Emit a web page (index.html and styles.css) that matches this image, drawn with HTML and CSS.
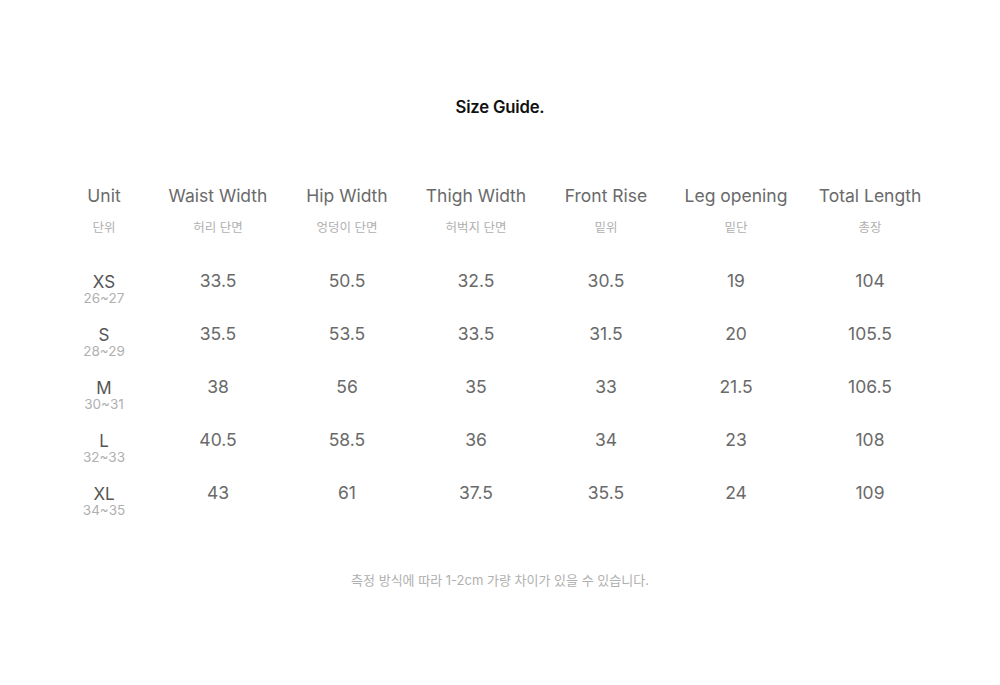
FILE: index.html
```html
<!DOCTYPE html>
<html lang="ko">
<head>
<meta charset="utf-8">
<link rel="stylesheet" href="styles.css">
</head>
<body>
<div class="page">
  <h1 class="title">Size Guide.</h1>
  <div class="table">
    <div class="head"><div class="en">Unit</div><div class="ko">단위</div></div>
    <div class="head"><div class="en">Waist Width</div><div class="ko">허리 단면</div></div>
    <div class="head"><div class="en">Hip Width</div><div class="ko">엉덩이 단면</div></div>
    <div class="head"><div class="en">Thigh Width</div><div class="ko">허벅지 단면</div></div>
    <div class="head"><div class="en">Front Rise</div><div class="ko">밑위</div></div>
    <div class="head"><div class="en">Leg opening</div><div class="ko">밑단</div></div>
    <div class="head"><div class="en">Total Length</div><div class="ko">총장</div></div>

    <div class="size"><div class="lbl">XS</div><div class="rng">26~27</div></div>
    <div class="val">33.5</div><div class="val">50.5</div><div class="val">32.5</div><div class="val">30.5</div><div class="val">19</div><div class="val">104</div>

    <div class="size"><div class="lbl">S</div><div class="rng">28~29</div></div>
    <div class="val">35.5</div><div class="val">53.5</div><div class="val">33.5</div><div class="val">31.5</div><div class="val">20</div><div class="val">105.5</div>

    <div class="size"><div class="lbl">M</div><div class="rng">30~31</div></div>
    <div class="val">38</div><div class="val">56</div><div class="val">35</div><div class="val">33</div><div class="val">21.5</div><div class="val">106.5</div>

    <div class="size"><div class="lbl">L</div><div class="rng">32~33</div></div>
    <div class="val">40.5</div><div class="val">58.5</div><div class="val">36</div><div class="val">34</div><div class="val">23</div><div class="val">108</div>

    <div class="size"><div class="lbl">XL</div><div class="rng">34~35</div></div>
    <div class="val">43</div><div class="val">61</div><div class="val">37.5</div><div class="val">35.5</div><div class="val">24</div><div class="val">109</div>
  </div>
  <p class="note">측정 방식에 따라 1-2cm 가량 차이가 있을 수 있습니다.</p>
</div>
</body>
</html>
```
FILE: styles.css
```css
* { box-sizing: border-box; }
html, body { margin: 0; padding: 0; background: #fff; }
body {
  font-family: Inter, "Noto Sans CJK KR", sans-serif;
  color: #666;
}
.page {
  width: 1000px;
  height: 685px;
  padding-top: 96px;
}
.title {
  margin: 0;
  text-align: center;
  font-size: 16.7px;
  font-weight: 600;
  line-height: 22px;
  color: #111;
  letter-spacing: -0.2px;
}
.table {
  display: grid;
  grid-template-columns: 88px 140px 118px 140px 120px 140px 128px;
  margin: 66px 0 0 60px;
  row-gap: 0;
  text-align: center;
}
.head { padding-bottom: 34px; }
.en {
  font-size: 17.5px;
  line-height: 24px;
  color: #6a6a6a;
}
.ko {
  margin-top: 12px;
  font-size: 12.5px;
  line-height: 16px;
  color: #b0b0b0;
}
.size { height: 53px; }
.lbl {
  font-size: 17px;
  line-height: 20px;
  color: #555;
  padding-top: 2px;
}
.rng {
  font-size: 13.5px;
  line-height: 12px;
  color: #b0b0b0;
}
.val {
  font-size: 17.5px;
  line-height: 22px;
  color: #6a6a6a;
}
.note {
  margin: 37px 0 0;
  text-align: center;
  font-size: 13px;
  line-height: 16px;
  color: #b0b0b0;
}
```
